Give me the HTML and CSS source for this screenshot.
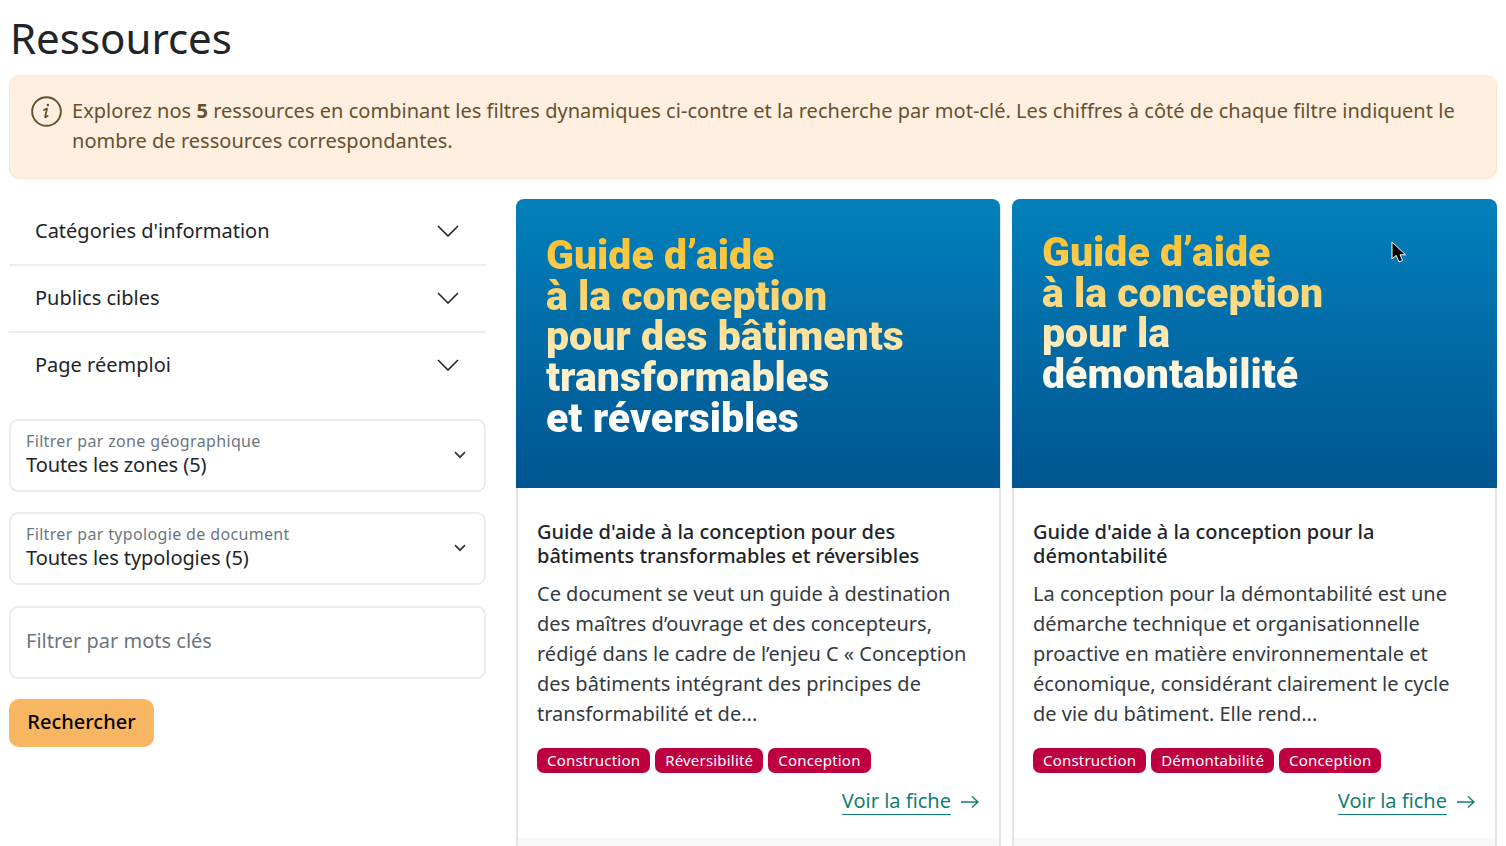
FILE: index.html
```html
<!DOCTYPE html>
<html lang="fr">
<head>
    <meta charset="UTF-8">
    <meta name="viewport" content="width=device-width, initial-scale=1.0">
    <title>Ressources</title>
    <link rel="stylesheet" href="styles.css">
</head>
<body>

<h1 class="page-title">Ressources</h1>

<div class="alert">
    <svg class="alert-icon" viewBox="0 0 32 32" width="31" height="31" fill="none" stroke="#66512c" stroke-width="2">
        <circle cx="16" cy="16" r="14.8"/>
        <path d="M13.4 14.6c1-1 2-1.6 3.2-1.6l-2 8.2c-.2 1 .6 1.2 2.6-.6" stroke-width="1.8" stroke-linecap="round" stroke-linejoin="round"/>
        <circle cx="17.4" cy="9.2" r="1.3" fill="#66512c" stroke="none"/>
    </svg>
    <p>Explorez nos <strong>5</strong> ressources en combinant les filtres dynamiques ci-contre et la recherche par mot-clé. Les chiffres à côté de chaque filtre indiquent le nombre de ressources correspondantes.</p>
</div>

<main class="layout">
    <aside class="filters">
        <div class="accordion">
            <div class="accordion-item">
                <span>Catégories d'information</span>
                <svg viewBox="0 0 22 12" width="22" height="12" fill="none" stroke="#212529" stroke-width="1.6"><path d="M1 1l10 10L21 1"/></svg>
            </div>
            <div class="accordion-item">
                <span>Publics cibles</span>
                <svg viewBox="0 0 22 12" width="22" height="12" fill="none" stroke="#212529" stroke-width="1.6"><path d="M1 1l10 10L21 1"/></svg>
            </div>
            <div class="accordion-item">
                <span>Page réemploi</span>
                <svg viewBox="0 0 22 12" width="22" height="12" fill="none" stroke="#212529" stroke-width="1.6"><path d="M1 1l10 10L21 1"/></svg>
            </div>
        </div>

        <div class="select-box">
            <div>
                <label>Filtrer par zone géographique</label>
                <div class="select-value">Toutes les zones (5)</div>
            </div>
            <svg viewBox="0 0 12 8" width="12" height="8" fill="none" stroke="#343a40" stroke-width="1.8"><path d="M1 1.2l5 5 5-5"/></svg>
        </div>
        <div class="select-box">
            <div>
                <label>Filtrer par typologie de document</label>
                <div class="select-value">Toutes les typologies (5)</div>
            </div>
            <svg viewBox="0 0 12 8" width="12" height="8" fill="none" stroke="#343a40" stroke-width="1.8"><path d="M1 1.2l5 5 5-5"/></svg>
        </div>
        <div class="select-box keyword">Filtrer par mots clés</div>
        <button class="search-btn">Rechercher</button>
    </aside>

    <section class="cards">
        <article class="card">
            <div class="cover">
                <div class="cover-title">Guide d’aide<br>à la conception<br>pour des bâtiments<br>transformables<br>et réversibles</div>
            </div>
            <div class="card-body">
                <h2>Guide d'aide à la conception pour des bâtiments transformables et réversibles</h2>
                <p>Ce document se veut un guide à destination des maîtres d’ouvrage et des concepteurs, rédigé dans le cadre de l’enjeu C « Conception des bâtiments intégrant des principes de transformabilité et de...</p>
                <div class="tags">
                    <span class="tag">Construction</span>
                    <span class="tag">Réversibilité</span>
                    <span class="tag">Conception</span>
                </div>
                <div class="card-link">
                    <a href="#">Voir la fiche</a>
                    <svg viewBox="0 0 20 14" width="20" height="14" fill="none" stroke="#12806f" stroke-width="1.4"><path d="M1 7h17M12 1.5L18 7l-6 5.5"/></svg>
                </div>
            </div>
            <div class="card-footer"></div>
        </article>

        <article class="card">
            <div class="cover cover-alt">
                <div class="cover-title">Guide d’aide<br>à la conception<br>pour la<br>démontabilité</div>
            </div>
            <div class="card-body">
                <h2>Guide d'aide à la conception pour la démontabilité</h2>
                <p>La conception pour la démontabilité est une démarche technique et organisationnelle proactive en matière environnementale et économique, considérant clairement le cycle de vie du bâtiment. Elle rend...</p>
                <div class="tags">
                    <span class="tag">Construction</span>
                    <span class="tag">Démontabilité</span>
                    <span class="tag">Conception</span>
                </div>
                <div class="card-link">
                    <a href="#">Voir la fiche</a>
                    <svg viewBox="0 0 20 14" width="20" height="14" fill="none" stroke="#12806f" stroke-width="1.4"><path d="M1 7h17M12 1.5L18 7l-6 5.5"/></svg>
                </div>
            </div>
            <div class="card-footer"></div>
        </article>
    </section>
</main>

<svg class="cursor" viewBox="0 0 16 23" width="16" height="23"><path d="M1 1v17l4.2-3.6L8 21l3.6-1.6-2.6-5.6h5.6z" fill="#000" stroke="#fff" stroke-width="1"/></svg>

</body>
</html>
```

FILE: styles.css
```css
html, body {
    height: 846px;
    overflow: hidden;
}
body {
    font-family: "Noto Sans", sans-serif;
    margin: 0;
    padding: 0 9px;
    background-color: #fff;
    color: #212529;
    position: relative;
}
.page-title {
    font-size: 42px;
    font-weight: 400;
    line-height: 50px;
    margin: 0;
    padding: 13px 0 12px 1px;
}
.alert {
    display: flex;
    align-items: flex-start;
    gap: 10px;
    background-color: #feefe0;
    border: 1px solid #fde5cc;
    border-radius: 10px;
    color: #66512c;
    height: 104px;
    box-sizing: border-box;
    padding: 20px 21px;
}
.alert-icon {
    flex: none;
}
.alert p {
    margin: 0;
    font-size: 20px;
    line-height: 30px;
    letter-spacing: 0.03px;
}
.layout {
    display: flex;
    gap: 30px;
    margin-top: 20px;
}
.filters {
    width: 477px;
    flex: none;
}
.accordion {
    margin-bottom: 19px;
}
.accordion-item {
    display: flex;
    justify-content: space-between;
    align-items: center;
    height: 67px;
    box-sizing: border-box;
    padding: 0 27px 2px 26px;
    font-size: 20px;
    border-bottom: 2px solid #eee;
}
.accordion-item:last-child {
    border-bottom-color: transparent;
}
.select-box {
    display: flex;
    justify-content: space-between;
    align-items: center;
    height: 73px;
    box-sizing: border-box;
    border: 2px solid #e9ecef;
    border-radius: 9px;
    padding: 0 18px 4px 15px;
    margin-bottom: 20.4px;
}
.select-box svg {
    margin-top: 2px;
}
.select-box label {
    display: block;
    font-size: 16px;
    line-height: 22px;
    letter-spacing: 0.35px;
    color: #6c757d;
}
.select-value {
    font-size: 20px;
    line-height: 26px;
    letter-spacing: -0.08px;
}
.keyword {
    font-size: 20px;
    color: #6c757d;
}
.search-btn {
    display: block;
    width: 145px;
    height: 48px;
    background-color: #f8b663;
    color: #000;
    border: none;
    border-radius: 10px;
    font-family: inherit;
    font-size: 20px;
    font-weight: 500;
    padding: 0 0 3px;
}
.cards {
    display: flex;
    gap: 11px;
    flex: 1;
    min-width: 0;
}
.card {
    width: 485px;
    flex: none;
    box-sizing: border-box;
    border: 2px solid #e4e4e4;
    border-top: none;
    border-radius: 8px 8px 0 0;
}
.cover {
    margin: 0 -2px;
    height: 289px;
    border-radius: 8px 8px 0 0;
    background: linear-gradient(180deg, #0280bb 0%, #005590 100%);
    box-sizing: border-box;
    padding: 36px 30px 0;
}
.card:first-child .cover {
    margin-right: -1px;
}
.cover-alt {
    padding-top: 33px;
}
.cover-title {
    display: inline-block;
    font-family: Roboto, sans-serif;
    font-weight: 900;
    font-size: 41px;
    line-height: 40.7px;
    background: linear-gradient(180deg, #fbc02a 0%, #fff 90%);
    -webkit-background-clip: text;
    background-clip: text;
    color: transparent;
}
.cover-alt .cover-title {
    background: linear-gradient(180deg, #fbc02a 0%, #fff 100%);
    -webkit-background-clip: text;
    background-clip: text;
}
.card-body {
    height: 350px;
    box-sizing: border-box;
    padding: 32px 19px 0;
}
.card-body h2 {
    font-size: 20px;
    font-weight: 500;
    line-height: 24px;
    margin: 0 0 11px;
}
.card-body p {
    font-size: 20px;
    line-height: 30px;
    margin: 0 0 19px;
    color: #343a40;
}
.tags {
    display: flex;
    gap: 5px;
}
.tag {
    background-color: #bf0040;
    color: #fff;
    font-size: 15px;
    line-height: 25px;
    letter-spacing: 0.2px;
    padding: 0 10px;
    border-radius: 7px;
}
.card-link {
    display: flex;
    justify-content: flex-end;
    align-items: center;
    gap: 9px;
    margin-top: 15px;
}
.card-link a {
    color: #12806f;
    font-size: 20px;
    line-height: 26px;
    text-decoration: none;
    border-bottom: 1px solid #12806f;
}
.card-footer {
    height: 40px;
    background-color: #f8f8fb;
}
.cursor {
    position: absolute;
    left: 1391px;
    top: 241px;
}
```
